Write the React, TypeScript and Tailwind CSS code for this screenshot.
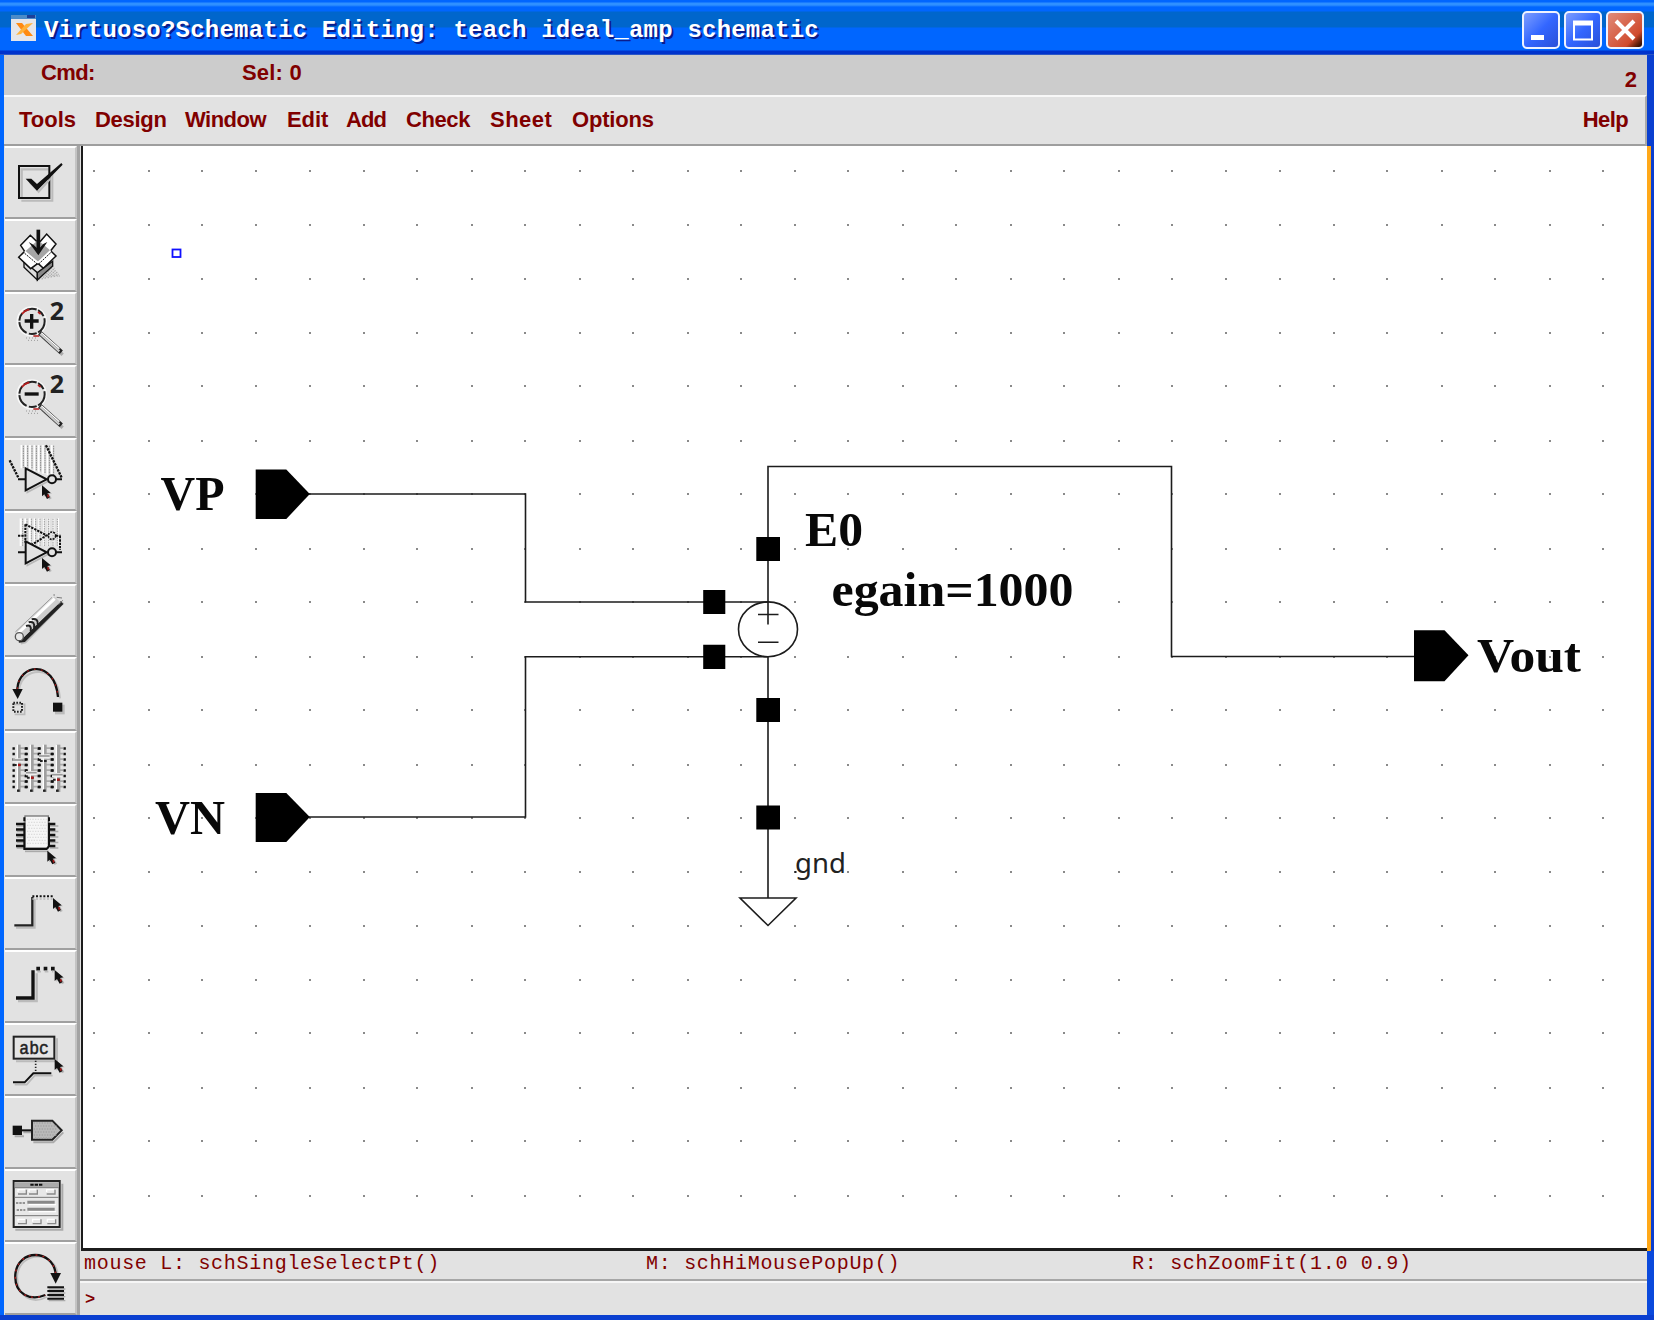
import React from "react";

const MENUS = [
  { label: "Tools", box: "w-[76px] tracking-[0px]" },
  { label: "Design", box: "w-[90px] tracking-[-0.3px]" },
  { label: "Window", box: "w-[102px] tracking-[-0.5px]" },
  { label: "Edit", box: "w-[59px] tracking-[-0.1px]" },
  { label: "Add", box: "w-[60px] tracking-[-0.9px]" },
  { label: "Check", box: "w-[84px] tracking-[-0.4px]" },
  { label: "Sheet", box: "w-[82px] tracking-[0.5px]" },
  { label: "Options", box: "w-[90px] tracking-[-0.2px]" },
];

const range = (n: number) => Array.from({ length: n }, (_, i) => i);

function Cursor({ x, y }: { x: number; y: number }) {
  return (
    <g transform={`translate(${x} ${y})`}>
      <path d="M5 5V35L12 29L22 43L29 39L21 25H30Z" fill="#b5b5b5" />
      <path d="M0 0V33L7 27L15 41L24 36L16 24L26 22Z" fill="#111" />
      <path d="M15 28L20 27L22 34L17 37Z" fill="#a01818" />
    </g>
  );
}

function Magnifier({ y, plus }: { y: number; plus?: boolean }) {
  return (
    <g transform={`translate(0 ${y})`} fill="none">
      <path d="M78 138h3m6 0h3m6 0h3m6 0h3M84 145h3m6 0h3m6 0h3m6 0h3" stroke="#999" strokeWidth="3" />
      <path d="M128 134L188 188" stroke="#aaa" strokeWidth="10" />
      <circle cx="95" cy="88" r="43" stroke="#f8f8f8" strokeWidth="5" />
      <circle cx="96" cy="88" r="38" stroke="#222" strokeWidth="6" strokeDasharray="40 5 24 7" />
      <path d="M66 66Q74 55 88 52M114 60l8 6M100 132h18" stroke="#b21c1c" strokeWidth="5" />
      <path d="M119 122L184 181" stroke="#222" strokeWidth="14" />
      <path d="M121 126L178 178" stroke="#ccc" strokeWidth="7" />
      <path d="M124 122L178 170" stroke="#fff" strokeWidth="4" />
      <path d={plus ? "M74 87H116M95 66V110" : "M74 87H116"} stroke="#111" strokeWidth="10" />
      <text x="149" y="83" fill="#222" fontSize="74" fontWeight="700" fontFamily="Noto Sans, sans-serif" textLength="43" lengthAdjust="spacingAndGlyphs">2</text>
    </g>
  );
}

function Inverter({ y }: { y: number }) {
  return (
    <g transform={`translate(0 ${y})`} fill="none">
      <path d="M82 7V73L146 39Z" stroke="#b8b8b8" strokeWidth="5" />
      <path d="M77 1V67L140 34Z" fill="#e3e3e3" stroke="#111" strokeWidth="6" />
      <path d="M54 34H76M168 34H186" stroke="#111" strokeWidth="6" />
      <circle cx="156" cy="34" r="12" fill="#e3e3e3" stroke="#111" strokeWidth="6" />
    </g>
  );
}

const icons: { y: number; art: React.ReactNode }[] = [
  {
    y: 20,
    art: (
      <g fill="none">
        <path d="M64 184H157V98" stroke="#bbb" strokeWidth="6" />
        <path d="M65 174V90H146" stroke="#bbb" strokeWidth="7" />
        <rect x="57" y="80" width="91" height="96" stroke="#111" strokeWidth="6" />
        <path d="M90 130L116 157L152 117" stroke="#bbb" strokeWidth="6" />
        <path d="M77 118H94L111 134L184 71L188 76L111 154Z" fill="#111" />
      </g>
    ),
  },
  {
    y: 239,
    art: (
      <g stroke="#111" strokeWidth="4">
        <g stroke="#aaa" strokeWidth="3.5" strokeDasharray="5 2">
          {range(7).map((i) => (
            <path key={i} d={`M${116 + i * 9} ${422 - i * 2}L${156 + i * 4} ${374 + i * 6}`} />
          ))}
        </g>
        <path d="M72 366L112 400V422L72 384Z" fill="#ddd" />
        <path d="M158 366L112 400V422L158 380Z" fill="#888" />
        <path d="M62 318L91 288L116 312L140 284L168 314L152 334L168 350L130 387L114 372L92 388L56 354L74 336Z" fill="#fff" strokeWidth="4.5" />
        <path d="M76 336L114 372L152 334L114 302Z" fill="#a5a5a5" stroke="none" />
        <path d="M74 336L114 370L152 334" fill="none" stroke="#fff" strokeWidth="5" />
        <path d="M74 342L114 376L152 340" fill="none" strokeDasharray="6 3" strokeWidth="3" />
        <path d="M115 271V334" strokeWidth="11" />
        <path d="M86 308L115 348L142 308L130 314L115 330L100 316Z" fill="#111" stroke="none" />
      </g>
    ),
  },
  { y: 458, art: <Magnifier y={458} plus /> },
  { y: 678, art: <Magnifier y={678} /> },
  {
    y: 25,
    art: (
      <g fill="none">
        {range(8).map((i) => (
          <g key={i}>
            <path d={`M${64 + i * 13} 46V${116 + (i > 1 ? (i - 1) * 4 : 0)}`} stroke="#fff" strokeWidth="5" />
            <path d={`M${70 + i * 13} 48V${114 + (i > 1 ? (i - 1) * 4 : 0)}`} stroke="#888" strokeWidth="3" strokeDasharray="5 2" />
          </g>
        ))}
        <path d="M29 92L56 146M138 47L186 146" stroke="#111" strokeWidth="7" strokeDasharray="7 3" />
        <Inverter y={115} />
        <Cursor x={126} y={167} />
      </g>
    ),
  },
  {
    y: 245,
    art: (
      <g fill="none">
        {range(9).map((i) => (
          <g key={i}>
            <path d={`M${62 + i * 14} 267V350`} stroke="#fff" strokeWidth="6" />
            <path d={`M${68 + i * 13} 268V352`} stroke="#999" strokeWidth="3" strokeDasharray="5 2" />
          </g>
        ))}
        <path d="M54 319H76M76 285V340M76 285L140 318L90 350M168 319H182M180 320V362" stroke="#111" strokeWidth="6" strokeDasharray="7 3" />
        <circle cx="156" cy="319" r="11" stroke="#111" strokeWidth="5" strokeDasharray="6 3" />
        <Inverter y={335} />
        <Cursor x={126} y={386} />
      </g>
    ),
  },
  {
    y: 464,
    art: (
      <g fill="none">
        <path d="M62 642L76 638L190 520" stroke="#bbb" strokeWidth="8" />
        <path d="M56 634L72 632L186 520" stroke="#222" strokeWidth="12" />
        <path d="M58 618L172 510" stroke="#cdcdcd" strokeWidth="25" />
        <path d="M46 608L156 504" stroke="#999" strokeWidth="3" />
        <path d="M54 612L164 508" stroke="#fff" strokeWidth="9" />
        <circle cx="58" cy="622" r="12" fill="#e8e8e8" stroke="#555" strokeWidth="4" />
        <path d="M78 590Q96 584 92 606M86 579Q106 574 102 596M95 570Q116 566 113 586" stroke="#222" strokeWidth="6" />
        <path d="M160 497h5M170 504L186 506M176 526l12 -13" stroke="#777" strokeWidth="3" />
      </g>
    ),
  },
  {
    y: 684,
    art: (
      <g fill="none">
        <path d="M58 780C64 714 172 700 180 808" stroke="#c0c0c0" strokeWidth="6" />
        <path d="M52 780C56 703 164 690 174 804" stroke="#111" strokeWidth="7" />
        <path d="M52 780C56 703 164 690 174 804" stroke="#a01818" strokeWidth="4" strokeDasharray="5 16" />
        <path d="M37 780H68L53 810Z" fill="#111" />
        <path d="M42 826H74V856H44" stroke="#bbb" strokeWidth="5" />
        <rect x="40" y="821" width="26" height="27" stroke="#222" strokeWidth="6" strokeDasharray="5 4" />
        <path d="M165 827H194V856H165Z" fill="#bbb" />
        <path d="M159 821H187V848H159Z" fill="#111" />
      </g>
    ),
  },
  {
    y: 17,
    art: (
      <g fill="none">
        {[41, 80, 119, 158].map((x, i) => (
          <g key={x}>
            <path d={`M${x} 66V190M${x + 36} 66V190`} stroke="#111" strokeWidth="7" strokeDasharray="7 9.5" />
            <path d={`M${x + 25} 66V190`} stroke="#aaa" strokeWidth="12" strokeDasharray="5 11.5" />
            <path d={`M${x + 17} 58V200`} stroke="#a0a0a0" strokeWidth={i === 3 ? 12 : 8} />
            <path d={`M${x + 11} 58V196`} stroke="#fff" strokeWidth="4" />
            <path d={`M${x + 10} 196h8`} stroke="#222" strokeWidth="7" />
          </g>
        ))}
        {[[39, 104], [78, 142], [117, 92], [156, 148]].map(([x, y], i) => (
          <g key={x}>
            <path d={`M${x} ${y - 5}H${x + 32}V${y + 8}H${x}Z`} fill="#eee" />
            <path d={`M${x} ${y}H${x + 32}`} stroke="#999" strokeWidth="5" />
            <path d={`M${x + 3} ${y + 15}H${x + 25}`} stroke="#222" strokeWidth="6" strokeDasharray="8 4" />
            {i !== 2 && <path d={`M${x + 15} ${y + 15}h8`} stroke="#b01818" strokeWidth="7" />}
          </g>
        ))}
      </g>
    ),
  },
  {
    y: 236,
    art: (
      <g fill="none">
        {range(5).map((i) => (
          <g key={i}>
            <path d={`M50 ${302 + i * 16.5}H77M150 ${302 + i * 16.5}H175`} stroke="#aaa" strokeWidth="5" />
            <path d={`M48 ${296 + i * 16.5}H76M144 ${296 + i * 16.5}H166`} stroke="#111" strokeWidth="7" />
          </g>
        ))}
        <rect x="75" y="272" width="70" height="96" fill="#f6f6f6" stroke="#777" strokeWidth="4" />
        {range(9).map((i) => (
          <path key={i} d={`M${81 + (i % 2) * 4} ${282 + i * 9}H140`} stroke="#dcdcdc" strokeWidth="4" strokeDasharray="4 4" />
        ))}
        <path d="M75 378H146" stroke="#aaa" strokeWidth="5" />
        <path d="M73 276v12M147 276v12M73 292V371H140L147 362V292" stroke="#111" strokeWidth="6" />
        <Cursor x={142} y={376} />
      </g>
    ),
  },
  {
    y: 456,
    art: (
      <g fill="none">
        <path d="M48 608H104V522" stroke="#bbb" strokeWidth="6" />
        <path d="M43 601H97V516" stroke="#222" strokeWidth="7" />
        <path d="M97 514H162" stroke="#111" strokeWidth="6" strokeDasharray="6 5" />
        <path d="M97 522H158" stroke="#bbb" strokeWidth="4" strokeDasharray="6 5" />
        <Cursor x={159} y={519} />
      </g>
    ),
  },
  {
    y: 674,
    art: (
      <g fill="none">
        <path d="M54 827H110V744" stroke="#bbb" strokeWidth="7" />
        <path d="M48 818H99V735" stroke="#111" strokeWidth="10" />
        <path d="M109 730H166" stroke="#111" strokeWidth="11" strokeDasharray="11 11" />
        <path d="M112 739H160" stroke="#bbb" strokeWidth="5" strokeDasharray="11 11" />
        <Cursor x={164} y={734} />
      </g>
    ),
  },
  {
    y: 24,
    art: (
      <g fill="none">
        <path d="M48 139H171V70" stroke="#bbb" strokeWidth="6" />
        <rect x="41" y="65" width="122" height="66" fill="#e5e5e5" stroke="#222" strokeWidth="6" />
        <g transform="translate(58 116) scale(0.88 1)">
          <text fill="#222" fontSize="56" fontFamily="Liberation Mono, monospace" stroke="#222" strokeWidth="1.5">abc</text>
        </g>
        <path d="M107 137V171" stroke="#222" strokeWidth="5" strokeDasharray="4 5" />
        <path d="M44 209H80L104 182H158" stroke="#bbb" strokeWidth="5" />
        <path d="M39 202H74L100 175H154" stroke="#111" strokeWidth="6" />
        <Cursor x={164} y={132} />
      </g>
    ),
  },
  {
    y: 243,
    art: (
      <g fill="none">
        <path d="M44 364H72M70 352H96M100 382H160L190 352" stroke="#aaa" strokeWidth="6" />
        <path d="M38 332H66V360H38Z" fill="#111" />
        <path d="M64 346H96" stroke="#111" strokeWidth="6" />
        <path d="M96 317H157L185 346L157 374H96Z" fill="#b9b9b9" stroke="#222" strokeWidth="6" />
        {range(6).map((i) => (
          <path key={i} d={`M${101 + (i % 2) * 4} ${324 + i * 9}H${i === 0 || i === 5 ? 156 : 170}`} stroke="#a4a4a4" strokeWidth="4" strokeDasharray="4 4" />
        ))}
      </g>
    ),
  },
  {
    y: 462,
    art: (
      <g fill="none">
        <path d="M46 644H187V506" stroke="#aaa" strokeWidth="6" />
        <rect x="41" y="498" width="138" height="138" fill="#e8e8e8" stroke="#222" strokeWidth="6" />
        <path d="M44 509H176" stroke="#aaa" strokeWidth="15" />
        <path d="M91 509H128" stroke="#111" strokeWidth="6" strokeDasharray="10 3" />
        <path d="M44 518H176M44 547H176M44 602H176" stroke="#777" strokeWidth="3" />
        {[[54, 537], [87, 537], [140, 537], [54, 626], [98, 626], [142, 626]].map(([x, y]) => (
          <g key={`${x}-${y}`}>
            <path d={`M${x} ${y - 6}v-7h22`} stroke="#fff" strokeWidth="4" />
            <path d={`M${x} ${y}h25v-13`} stroke="#888" strokeWidth="4" />
          </g>
        ))}
        <path d="M48 564H76M50 585H76" stroke="#777" strokeWidth="4" strokeDasharray="7 3" />
        <path d="M82 562H164M82 583H164" stroke="#888" strokeWidth="9" />
        <path d="M86 569H168M86 590H168" stroke="#fff" strokeWidth="4" />
      </g>
    ),
  },
  {
    y: 681,
    art: (
      <g fill="none">
        <path d="M174 780C166 706 60 706 52 782C50 850 100 868 140 846" stroke="#bdbdbd" strokeWidth="5" />
        <path d="M167 776C158 702 54 700 46 778C42 840 94 858 136 840" stroke="#111" strokeWidth="7" />
        <path d="M167 776C158 702 54 700 46 778C42 840 94 858 136 840" stroke="#b02020" strokeWidth="4" strokeDasharray="6 15" />
        <path d="M151 774H183L167 806Z" fill="#111" />
        <path d="M146 822H196M146 834H196M146 845H196M146 857H196" stroke="#aaa" strokeWidth="4" />
        <path d="M142 817H192M142 828H192M142 840H192M142 851H192" stroke="#111" strokeWidth="6" />
      </g>
    ),
  },
];

function ToolBar() {
  return (
    <div className="flex w-[76px] shrink-0 flex-col border-r-[3px] border-[#a3a3a3] bg-[#e2e2e2] pl-px">
      {icons.map((icon, i) => (
        <button
          key={i}
          className="block min-h-0 flex-1 border-t-2 border-r-2 border-b-2 border-t-white border-r-[#c4c4c4] border-b-[#a0a0a0]"
        >
          <svg viewBox={`15 ${icon.y + 6} 207 207`} className="block h-[69px] w-[69px]">
            {icon.art}
          </svg>
        </button>
      ))}
    </div>
  );
}

function Label({ x, y, size, width, children }: { x: number; y: number; size: number; width: number; children: string }) {
  return (
    <text
      x={x}
      y={y}
      fill="#080808"
      fontFamily="Liberation Serif, serif"
      fontWeight="700"
      fontSize={size}
      textLength={width}
      lengthAdjust="spacingAndGlyphs"
    >
      {children}
    </text>
  );
}

function Schematic() {
  return (
    <svg viewBox="83 146 1564 1102" className="block h-[1102px] w-[1564px] bg-white">
      <g fill="#8a8a8a">
        {range(20).flatMap((r) =>
          range(29).map((c) => (
            <rect
              key={`${r}-${c}`}
              x={Math.round(93 + c * 53.89 + (c % 2) * 0.8)}
              y={Math.round(169.7 + r * 53.92 + (r % 2) * 0.8)}
              width="2"
              height="2"
            />
          ))
        )}
      </g>
      <path d="M820 534h26v30h-26zM840 596h230v15h-230z" fill="#fff" />
      <rect x="172.5" y="249.5" width="8" height="7.5" fill="none" stroke="#1010ff" strokeWidth="1.8" />
      <g fill="none" stroke="#1c1c1c" strokeWidth="1.6">
        <path d="M309 494H525.5V602H768" />
        <path d="M309 817H525.5V656.8H768" />
        <path d="M768 602V466.5H1171.5V656.5H1414" />
        <path d="M768 656V898M740 898H796L768 925.5Z" />
        <ellipse cx="768" cy="629.3" rx="29.5" ry="27.4" />
        <path d="M758 614.5H778.5M768 602V624.5M758 642.2H778.5" />
      </g>
      <g fill="#000">
        <path d="M255.7 469.5H286.3L309.8 494L286.3 519H255.7Z" />
        <path d="M255.7 793H286.3L309.8 817L286.3 842H255.7Z" />
        <path d="M1414 630.3H1444.5L1468.5 655.3L1444.5 681.3H1414Z" />
        <path d="M756.3 537H780V561H756.3ZM756.3 698H780V722H756.3ZM756.3 805.5H780V829.5H756.3Z" />
        <path d="M703.2 590H725.3V614H703.2ZM703.2 644.8H725.3V669H703.2Z" />
      </g>
      <Label x={160.5} y={509.5} size={49.5} width={64}>VP</Label>
      <Label x={155} y={833.5} size={49.5} width={70}>VN</Label>
      <Label x={805} y={546.3} size={49.5} width={58}>E0</Label>
      <Label x={831.5} y={606.3} size={48} width={242}>egain=1000</Label>
      <Label x={1477} y={672} size={49} width={104}>Vout</Label>
      <g fill="#222">
        <rect x="794.5" y="871" width="2" height="2" />
        <text x="795" y="873" fontFamily="Noto Sans, sans-serif" fontSize="27.5" textLength="51">gnd</text>
      </g>
    </svg>
  );
}

function WindowButton({ tone, children }: { tone: string; children: React.ReactNode }) {
  return (
    <button className={`h-[38px] w-[38px] rounded-[5px] border-2 border-[#eef2ff] ${tone}`}>
      <svg viewBox="0 0 34 34" className="block h-full w-full" fill="none" stroke="#fff">
        {children}
      </svg>
    </button>
  );
}

export default function App() {
  return (
    <div className="flex h-[1320px] w-[1654px] flex-col overflow-hidden bg-[#0a3fd0] font-['Liberation_Sans',sans-serif] text-[#800000]">
      <header className="flex h-[55px] shrink-0 items-start bg-[linear-gradient(to_bottom,#0066ff_0px,#0066ff_2px,#2f90ff_3px,#2f90ff_5px,#0066ff_7px,#0066ff_11px,#0066cc_12px,#0066cc_27px,#0066ff_28px,#0066ff_50px,#0033cc_51px,#0033cc_54px,#5478c0_55px)] pr-[10px] pl-[9px]">
        <svg viewBox="0 0 28 28" className="mt-[14px] h-[28px] w-[28px] shrink-0">
          <path d="M2 1H27V27H2Z" fill="#e6e6ea" />
          <path d="M2 1H27V5H2Z" fill="#4c8cc8" />
          <path d="M18 1H26V4H18Z" fill="#1c3f98" />
          <path d="M7 9L13 9L24 22L17 22Z" fill="#ff8a12" />
          <path d="M24 9L17 10L7 21L12 20Z" fill="#ffb13a" />
        </svg>
        <h1 className="mt-[16px] ml-[7px] grow font-['Liberation_Mono',monospace] text-[24px] leading-[30px] font-bold tracking-[0.22px] whitespace-pre text-white [text-shadow:2px_2px_0_#0a1c8c]">
          Virtuoso?Schematic Editing: teach ideal_amp schematic
        </h1>
        <div className="mt-[11px] flex gap-[4px]">
          <WindowButton tone="bg-linear-to-br from-[#7d9cff] via-[#3366ff] to-[#2a50d8]">
            <path d="M7 24.5H20" strokeWidth="5" />
          </WindowButton>
          <WindowButton tone="bg-linear-to-br from-[#7d9cff] via-[#3366ff] to-[#2a50d8]">
            <path d="M8 8V26.5H26V8" strokeWidth="2" />
            <path d="M7 10H27" strokeWidth="5" />
          </WindowButton>
          <WindowButton tone="bg-linear-to-br from-[#e08a78] via-[#d04a2c] via-75% to-[#1a0500]">
            <path d="M8 8L26 26M26 8L8 26" strokeWidth="4" />
          </WindowButton>
        </div>
      </header>

      <div className="mr-[7px] flex h-[40px] shrink-0 border-l-4 border-[#0066ff] bg-[#cccccc] text-[22px] leading-[26px] font-bold">
        <span className="mt-[5px] ml-[37px] w-[201px] tracking-[-0.6px]">Cmd:</span>
        <span className="mt-[5px] grow tracking-[0.2px]">Sel: 0</span>
        <span className="mt-[12px] mr-[10px]">2</span>
      </div>

      <nav className="mr-[7px] flex h-[51px] shrink-0 border-l-4 border-[#0066ff] bg-[#e2e2e2]">
        <div className="flex grow border-t-2 border-r-2 border-b-2 border-t-[#f8f8f8] border-r-[#aaa] border-b-[#9e9e9e] pl-[15px] text-[22px] leading-[26px] font-bold">
          {MENUS.map((m) => (
            <span key={m.label} className={`mt-[10px] shrink-0 ${m.box}`}>
              {m.label}
            </span>
          ))}
          <span className="mt-[10px] mr-[17px] ml-auto tracking-[-0.6px]">Help</span>
        </div>
      </nav>

      <main className="flex h-[1169px] shrink-0 border-l-4 border-[#0066ff] bg-[#e2e2e2]">
        <ToolBar />
        <div className="flex min-w-0 grow flex-col">
          <div className="flex h-[1105px] shrink-0">
            <div className="ml-px h-[1105px] border-b-[3px] border-l-2 border-[#1c1c1c]">
              <Schematic />
            </div>
            <div className="w-[4px] bg-[#ffa818]" />
            <div className="grow bg-[#0a3fd0]" />
          </div>
          <div className="flex grow border-r-[7px] border-[#0a49dc]">
            <div className="flex grow flex-col">
              <div className="flex h-[28px] pl-[4px] font-['Liberation_Mono',monospace] text-[20px] leading-[25px] tracking-[0.71px] whitespace-pre">
                <span className="w-[562px]">mouse L: schSingleSelectPt()</span>
                <span className="w-[486px]">M: schHiMousePopUp()</span>
                <span>R: schZoomFit(1.0 0.9)</span>
              </div>
              <div className="h-[36px] border-t-2 border-[#a6a6a6] pt-[3px] pl-[5px] font-['Liberation_Mono',monospace] text-[17px] leading-[32px] font-bold shadow-[inset_0_2px_0_#f6f6f6]">
                &gt;
              </div>
            </div>
          </div>
        </div>
      </main>
    </div>
  );
}
